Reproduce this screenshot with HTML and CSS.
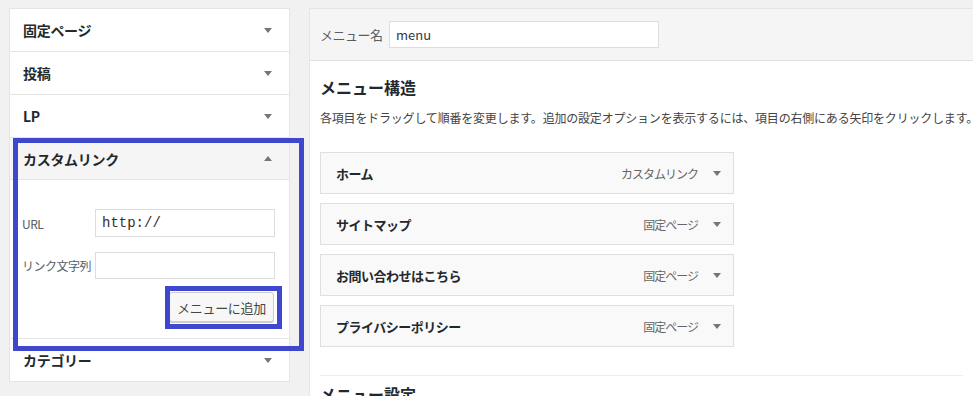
FILE: index.html
```html
<!DOCTYPE html>
<html lang="ja">
<head>
  <meta charset="UTF-8" />
  <title>メニュー</title>
  <link rel="stylesheet" href="styles.css">
</head>
<body>

  <div class="page">

    <!-- Left: item boxes -->
    <div class="sidebar">
      <div class="box">
        <div class="box-head"><span>固定ページ</span><i class="arrow"></i></div>
      </div>
      <div class="box">
        <div class="box-head"><span>投稿</span><i class="arrow"></i></div>
      </div>
      <div class="box">
        <div class="box-head"><span>LP</span><i class="arrow"></i></div>
      </div>
      <div class="box open">
        <div class="box-head"><span>カスタムリンク</span><i class="arrow up"></i></div>
        <div class="box-body">
          <div class="field">
            <label>URL</label>
            <input type="text" class="url" value="http://">
          </div>
          <div class="field second">
            <label>リンク文字列</label>
            <input type="text">
          </div>
          <div class="actions">
            <button>メニューに追加</button>
          </div>
        </div>
      </div>
      <div class="box">
        <div class="box-head"><span>カテゴリー</span><i class="arrow"></i></div>
      </div>
    </div>

    <!-- Right: menu editor -->
    <div class="editor">
      <div class="editor-head">
        <label>メニュー名</label>
        <input type="text" value="menu">
      </div>
      <div class="editor-body">
        <h3>メニュー構造</h3>
        <p class="desc">各項目をドラッグして順番を変更します。追加の設定オプションを表示するには、項目の右側にある矢印をクリックします。</p>

        <ul class="menu-items">
          <li><b>ホーム</b><span class="type">カスタムリンク</span><i class="arrow"></i></li>
          <li><b>サイトマップ</b><span class="type">固定ページ</span><i class="arrow"></i></li>
          <li><b>お問い合わせはこちら</b><span class="type">固定ページ</span><i class="arrow"></i></li>
          <li><b>プライバシーポリシー</b><span class="type">固定ページ</span><i class="arrow"></i></li>
        </ul>

        <div class="settings">
          <h3>メニュー設定</h3>
        </div>
      </div>
    </div>

  </div>

  <!-- annotation frames -->
  <div class="mark mark-box"></div>
  <div class="mark mark-button"></div>

</body>
</html>
```

FILE: styles.css
```css
* {
  box-sizing: border-box;
}

body {
  margin: 0;
  background: #f1f1f1;
  color: #23282d;
  font-family: "Noto Sans CJK JP", "Liberation Sans", sans-serif;
  font-size: 13px;
  overflow: hidden;
  height: 396px;
}

.page {
  display: flex;
  align-items: flex-start;
  gap: 19px;
  padding: 8px 0 0 9px;
}

/* arrows */
.arrow {
  display: inline-block;
  width: 0;
  height: 0;
  border-left: 4px solid transparent;
  border-right: 4px solid transparent;
  border-top: 5px solid #72777c;
}

.arrow.up {
  border-top: none;
  border-bottom: 5px solid #72777c;
}

/* sidebar */
.sidebar {
  width: 281px;
  flex-shrink: 0;
  background: #fff;
  border: 1px solid #e5e5e5;
}

.box {
  border-bottom: 1px solid #e5e5e5;
}

.box:last-child {
  border-bottom: none;
}

.box-head {
  height: 42px;
  display: flex;
  align-items: center;
  justify-content: space-between;
  padding: 0 17px 0 13px;
  font-size: 14px;
  font-weight: bold;
  letter-spacing: -0.3px;
}

.box.open .box-head {
  background: #f5f5f5;
  border-bottom: 1px solid #e5e5e5;
}

.box-body {
  padding: 29px 14px 16px 12px;
}

.field {
  display: flex;
  align-items: center;
}

.field.second {
  margin-top: 15px;
}

.field label {
  width: 73px;
  font-size: 12px;
  color: #555d66;
  letter-spacing: -0.5px;
  white-space: nowrap;
}

.field input {
  width: 180px;
  height: 27px;
  border: 1px solid #ddd;
  padding: 0 6px;
  font-size: 13px;
  color: #32373c;
  outline: none;
}

.field input.url {
  height: 28px;
  font-family: "Liberation Mono", "DejaVu Sans Mono", monospace;
  font-size: 14px;
  color: #3b2b2b;
}

.actions {
  display: flex;
  justify-content: flex-end;
  margin-top: 13px;
  padding-right: 1px;
}

.actions button {
  width: 105px;
  height: 30px;
  background: #f7f7f7;
  border: 1px solid #ccc;
  border-radius: 3px;
  box-shadow: 0 1px 0 #ccc;
  color: #444;
  font-family: inherit;
  font-size: 13px;
  letter-spacing: -0.3px;
  padding: 0;
}

/* editor */
.editor {
  flex: 1;
  min-width: 0;
  background: #fff;
  border: 1px solid #e5e5e5;
  border-right: none;
  height: 400px;
}

.editor-head {
  height: 52px;
  background: #f5f5f5;
  border-bottom: 1px solid #dfdfdf;
  display: flex;
  align-items: center;
  padding: 0 10px;
}

.editor-head label {
  width: 69px;
  color: #555d66;
  font-size: 13px;
  letter-spacing: -0.5px;
}

.editor-head input {
  width: 270px;
  height: 27px;
  border: 1px solid #ddd;
  padding: 0 6px;
  font-family: inherit;
  font-size: 13px;
  color: #32373c;
  outline: none;
}

.editor-body {
  padding: 0 10px;
}

.editor-body h3 {
  margin: 0;
  font-size: 16px;
  font-weight: bold;
  color: #23282d;
  letter-spacing: 0;
}

.editor-body > h3 {
  padding-top: 14px;
  line-height: 24px;
}

.desc {
  margin: 9px 0 0;
  font-size: 12px;
  letter-spacing: -0.2px;
  color: #444;
  white-space: nowrap;
  line-height: 20px;
}

.menu-items {
  list-style: none;
  margin: 24px 0 0;
  padding: 0;
  width: 414px;
  display: flex;
  flex-direction: column;
  gap: 9px;
}

.menu-items li {
  height: 42px;
  display: flex;
  align-items: center;
  background: #f9f9f9;
  border: 1px solid #dfdfdf;
  padding: 0 12px 0 15px;
}

.menu-items b {
  flex: 1;
  font-size: 13px;
  letter-spacing: -0.5px;
}

.menu-items .type {
  font-size: 12px;
  color: #666;
  letter-spacing: -1px;
  margin-right: 15px;
}

.settings {
  margin-top: 28px;
  border-top: 1px solid #eee;
  padding-top: 6px;
}

/* annotation frames */
.mark {
  position: absolute;
  border: 5px solid #3f48cc;
  pointer-events: none;
}

.mark-box {
  left: 13px;
  top: 138px;
  width: 291px;
  height: 213px;
}

.mark-button {
  left: 165px;
  top: 286px;
  width: 117px;
  height: 43px;
}
```
